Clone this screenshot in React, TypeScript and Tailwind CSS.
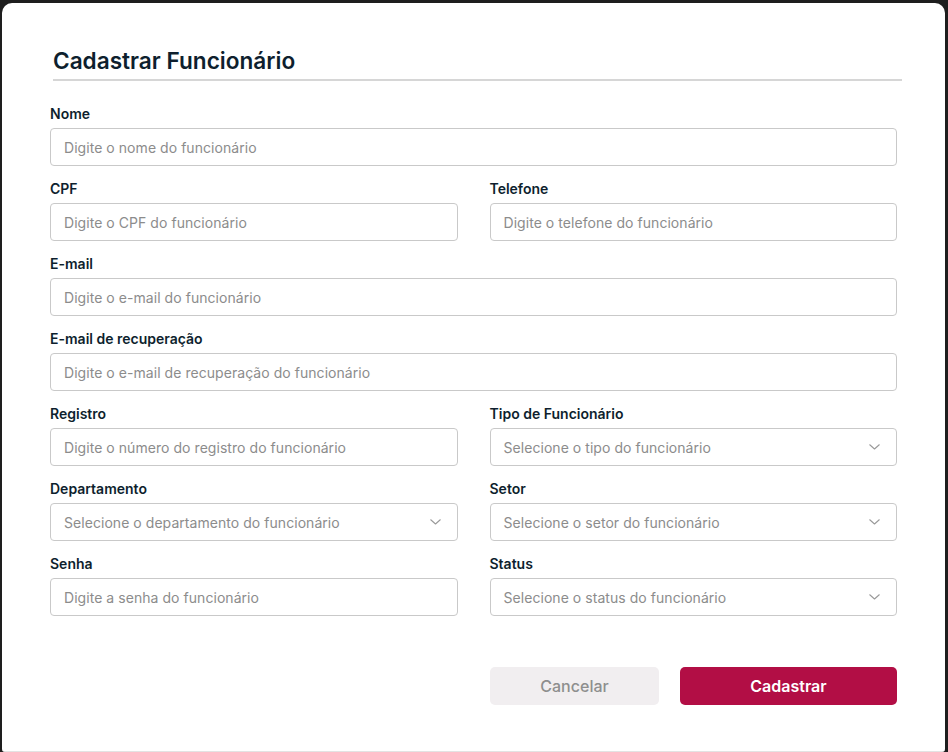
import React from "react";

const font = { fontFamily: "Inter, 'Noto Sans', sans-serif" };

function Chevron() {
  return (
    <svg width="11" height="6" viewBox="0 0 11 6" fill="none" className="shrink-0">
      <path d="M0.75 0.75 L5.5 5 L10.25 0.75" stroke="#9a9a9a" strokeWidth="1.1" strokeLinecap="round" strokeLinejoin="round" />
    </svg>
  );
}

function Field({ label, placeholder, select }: { label: string; placeholder: string; select?: boolean }) {
  return (
    <div className="flex flex-col">
      <label className="text-[14px] leading-[20px] font-semibold text-[#0e1f2e] h-[20px]">{label}</label>
      <div className="mt-[4px] h-[38px] border border-[#c9c9c9] rounded-[4px] flex items-center justify-between pl-[13px] pr-[16px] bg-white">
        <span className="text-[14px] text-[#8c8c8c] whitespace-nowrap tracking-[0.05px]">{placeholder}</span>
        {select && <Chevron />}
      </div>
    </div>
  );
}

export default function App() {
  return (
    <div className="w-[948px] h-[752px] bg-[#1e1e1e] pt-[3px] pl-[2px] pr-[3px] overflow-hidden" style={font}>
      <div className="bg-white h-[749px] rounded-t-[10px] rounded-b-[3px] border-b border-[#e3e3e3] px-[48px]">
        <div className="pt-[44px] ml-[3px] mr-[-5px] pb-[4px] border-b-2 border-[#d6d6d6]">
          <h1 className="text-[22.6px] leading-[28px] font-semibold text-[#0e1f2e]">Cadastrar Funcionário</h1>
        </div>
        <div className="mt-[23px] flex flex-col gap-[13px]">
          <Field label="Nome" placeholder="Digite o nome do funcionário" />
          <div className="grid grid-cols-2 gap-x-[32px]">
            <Field label="CPF" placeholder="Digite o CPF do funcionário" />
            <Field label="Telefone" placeholder="Digite o telefone do funcionário" />
          </div>
          <Field label="E-mail" placeholder="Digite o e-mail do funcionário" />
          <Field label="E-mail de recuperação" placeholder="Digite o e-mail de recuperação do funcionário" />
          <div className="grid grid-cols-2 gap-x-[32px]">
            <Field label="Registro" placeholder="Digite o número do registro do funcionário" />
            <Field label="Tipo de Funcionário" placeholder="Selecione o tipo do funcionário" select />
          </div>
          <div className="grid grid-cols-2 gap-x-[32px]">
            <Field label="Departamento" placeholder="Selecione o departamento do funcionário" select />
            <Field label="Setor" placeholder="Selecione o setor do funcionário" select />
          </div>
          <div className="grid grid-cols-2 gap-x-[32px]">
            <Field label="Senha" placeholder="Digite a senha do funcionário" />
            <Field label="Status" placeholder="Selecione o status do funcionário" select />
          </div>
        </div>
        <div className="mt-[51px] flex justify-end gap-[21px]">
          <button className="w-[169px] h-[38px] rounded-[5px] bg-[#f1eef0] text-[#8e8e8e] text-[16px] font-medium">Cancelar</button>
          <button className="w-[217px] h-[38px] rounded-[5px] bg-[#b20e45] text-white text-[16px] font-semibold">Cadastrar</button>
        </div>
      </div>
    </div>
  );
}
